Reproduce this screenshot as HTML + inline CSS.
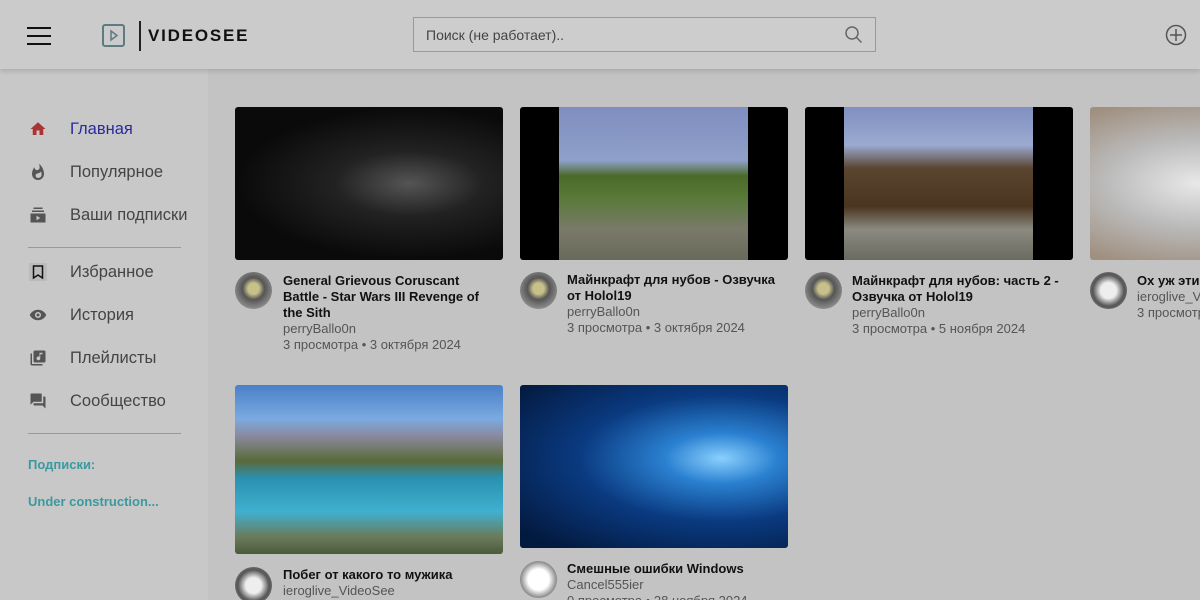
<!DOCTYPE html>
<html style="overflow:hidden"><head><meta charset="utf-8"><style>
*{margin:0;padding:0;box-sizing:border-box}
body{width:1200px;height:600px;overflow:hidden;background:#c3c3c3;font-family:"Liberation Sans",sans-serif;position:relative}
.hdr{position:absolute;left:0;top:0;width:1200px;height:69px;background:#cbcbcb;box-shadow:0 2px 5px rgba(0,0,0,.15);z-index:2}
.side{position:absolute;left:0;top:69px;width:208px;height:531px;background:#c8c8c8}
.burger{position:absolute;left:27px;top:27px;width:24px}
.burger i{display:block;height:2px;background:#111;margin-bottom:6px}
.logo{position:absolute;left:102px;top:24px;width:23px;height:23px;border:2px solid #5d7b80;border-radius:3px}
.bar{position:absolute;left:139px;top:21px;width:2px;height:30px;background:#222}
.brand{position:absolute;left:148px;top:26px;font-weight:bold;font-size:17px;letter-spacing:1.8px;color:#111}
.search{position:absolute;left:413px;top:17px;width:463px;height:35px;border:1px solid #999;background:#cdcdcd;font-size:14px;color:#444;padding:9px 12px}
.nav{position:absolute;left:70px;font-size:16.5px;color:#444}
.ico{position:absolute;left:29px;width:18px;height:18px}
.hr{position:absolute;left:28px;width:153px;height:1px;background:#999}
.sub{position:absolute;left:28px;font-size:13px;font-weight:bold;color:#3a9aa0}
.th{position:absolute;width:268px;border-radius:3px;overflow:hidden}
.av{position:absolute;width:37px;height:37px;border-radius:50%;background:radial-gradient(circle at 50% 45%,#c8c08a 0 20%,#555 40%,#888 70%,#aaa)}
.t{position:absolute;font-size:13px;font-weight:bold;color:#111;line-height:16px;width:210px}
.m{position:absolute;font-size:13px;color:#555;line-height:16px;white-space:nowrap}
</style></head><body>
<div class="hdr">
<div class="burger"><i></i><i></i><i></i></div>
<div class="logo"><svg width="19" height="19" viewBox="0 0 19 19" style="position:absolute;left:0;top:0"><path d="M7 5l6 4.5-6 4.5z" fill="none" stroke="#5d7b80" stroke-width="1.5"/></svg></div>
<div class="bar"></div><div class="brand">VIDEOSEE</div>
<div class="search">Поиск (не работает)..<svg width="18" height="18" style="position:absolute;right:12px;top:8px"><circle cx="7" cy="7" r="6" fill="none" stroke="#666" stroke-width="1.5"/><path d="M11.5 11.5l5 5" stroke="#666" stroke-width="1.5"/></svg></div>
<svg width="22" height="22" style="position:absolute;left:1165px;top:24px"><circle cx="11" cy="11" r="9.5" fill="none" stroke="#555" stroke-width="1.5"/><path d="M11 5v12M5 11h12" stroke="#555" stroke-width="1.5"/></svg>
</div>
<div class="side">
<svg class="ico" style="top:51px" viewBox="0 0 24 24"><path d="M10 20v-6h4v6h5v-8h3L12 3 2 12h3v8z" fill="#a33"/></svg>
<div class="nav" style="top:51px;color:#2a2aa0">Главная</div>
<svg class="ico" style="top:94px" viewBox="0 0 24 24"><path d="M13.5 1s.7 2.6.7 4.8c0 2-1.4 3.7-3.4 3.7S7.3 7.8 7.3 5.8L7.3 5.5C5.3 8 4 11.2 4 14.7a8 8 0 0016 0C20 9 17.3 4.4 13.5 1zM12 20c-1.8 0-3.2-1.4-3.2-3.1 0-1.6 1-2.7 2.8-3 1.7-.4 3.6-1.2 4.6-2.6.4 1.3.6 2.7.6 4.1 0 2.6-2.1 4.6-4.8 4.6z" fill="#555"/></svg>
<div class="nav" style="top:94px">Популярное</div>
<svg class="ico" style="top:137px" viewBox="0 0 24 24"><path d="M6 2h12v2H6zM4 6h16v2H4zM2 10h20v12H2zm8 3v6l5-3z" fill="#555"/></svg>
<div class="nav" style="top:137px">Ваши подписки</div>
<div class="hr" style="top:178px"></div>
<svg class="ico" style="top:194px" viewBox="0 0 24 24"><rect width="24" height="24" fill="#bbb"/><path d="M6 4h12v16l-6-4-6 4z" fill="none" stroke="#111" stroke-width="2"/></svg>
<div class="nav" style="top:194px">Избранное</div>
<svg class="ico" style="top:237px" viewBox="0 0 24 24"><path d="M12 5C7 5 3 8 1 12c2 4 6 7 11 7s9-3 11-7c-2-4-6-7-11-7zm0 11a4 4 0 110-8 4 4 0 010 8zm0-6a2 2 0 100 4 2 2 0 000-4z" fill="#555"/></svg>
<div class="nav" style="top:237px">История</div>
<svg class="ico" style="top:280px" viewBox="0 0 24 24"><path d="M4 6H2v14a2 2 0 002 2h14v-2H4zm16-4H8a2 2 0 00-2 2v12a2 2 0 002 2h12a2 2 0 002-2V4a2 2 0 00-2-2zm-2 5h-3v5.5a2.5 2.5 0 11-1-2V5h4z" fill="#555"/></svg>
<div class="nav" style="top:280px">Плейлисты</div>
<svg class="ico" style="top:323px" viewBox="0 0 24 24"><path d="M21 6h-2v9H6v2a1 1 0 001 1h11l4 4V7a1 1 0 00-1-1zm-4 6V3a1 1 0 00-1-1H3a1 1 0 00-1 1v14l4-4h10a1 1 0 001-1z" fill="#555"/></svg>
<div class="nav" style="top:323px">Сообщество</div>
<div class="hr" style="top:364px"></div>
<div class="sub" style="top:388px">Подписки:</div>
<div class="sub" style="top:425px">Under construction...</div>
</div>

<div class="th" style="left:235px;top:107px;height:153px;background:radial-gradient(ellipse at 65% 50%,#555 0,#222 30%,#0a0a0a 70%)"></div>
<div class="th" style="left:520px;top:107px;height:153px;background:linear-gradient(90deg,#000 0 39px,transparent 39px 228px,#000 228px),linear-gradient(180deg,#7f8ec0 0,#8fa0c8 35%,#4a6a2a 45%,#5a7a3a 60%,#7a7a6a 80%,#6a6a5a)"></div>
<div class="th" style="left:805px;top:107px;height:153px;background:linear-gradient(90deg,#000 0 39px,transparent 39px 228px,#000 228px),linear-gradient(180deg,#8090c0 0,#9aaad0 25%,#5a4530 40%,#4a3520 65%,#8a8a80 80%,#6a6a60)"></div>
<div class="th" style="left:1090px;top:107px;height:153px;background:radial-gradient(ellipse at 40% 50%,#e8e8e8 0,#bbb 40%,#a09080 80%)"></div>

<div class="av" style="left:235px;top:272px"></div>
<div class="t" style="left:283px;top:273px">General Grievous Coruscant Battle - Star Wars III Revenge of the Sith</div>
<div class="m" style="left:283px;top:321px">perryBallo0n</div>
<div class="m" style="left:283px;top:337px">3 просмотра • 3 октября 2024</div>

<div class="av" style="left:520px;top:272px"></div>
<div class="t" style="left:567px;top:272px;width:225px">Майнкрафт для нубов - Озвучка от Holol19</div>
<div class="m" style="left:567px;top:304px">perryBallo0n</div>
<div class="m" style="left:567px;top:320px">3 просмотра • 3 октября 2024</div>

<div class="av" style="left:805px;top:272px"></div>
<div class="t" style="left:852px;top:273px;width:225px">Майнкрафт для нубов: часть 2 - Озвучка от Holol19</div>
<div class="m" style="left:852px;top:305px">perryBallo0n</div>
<div class="m" style="left:852px;top:321px">3 просмотра • 5 ноября 2024</div>

<div class="av" style="left:1090px;top:272px;background:radial-gradient(circle,#eee 0 30%,#555 60%,#999)"></div>
<div class="t" style="left:1137px;top:273px;white-space:nowrap">Ох уж эти</div>
<div class="m" style="left:1137px;top:289px">ieroglive_VideoSee</div>
<div class="m" style="left:1137px;top:305px">3 просмотра</div>

<div class="th" style="left:235px;top:385px;height:169px;background:linear-gradient(180deg,#4a80c8 0,#7aaae0 20%,#8a8aa0 30%,#5a6a3a 45%,#2a90b0 55%,#40b0d0 75%,#6a7a5a 90%,#4a5a3a)"></div>
<div class="th" style="left:520px;top:385px;height:163px;background:radial-gradient(ellipse at 75% 45%,#8ad0ff 0,#2a80d0 20%,#0a3a80 50%,#031a40 90%)"></div>

<div class="av" style="left:235px;top:567px;background:radial-gradient(circle,#eee 0 30%,#555 60%,#999)"></div>
<div class="t" style="left:283px;top:567px;width:250px">Побег от какого то мужика</div>
<div class="m" style="left:283px;top:583px">ieroglive_VideoSee</div>
<div class="av" style="left:520px;top:561px;background:radial-gradient(circle,#fff 0 40%,#888 70%,#bbb)"></div>
<div class="t" style="left:567px;top:561px;width:250px">Смешные ошибки Windows</div>
<div class="m" style="left:567px;top:577px">Cancel555ier</div>
<div class="m" style="left:567px;top:593px">0 просмотра • 28 ноября 2024</div>
</body></html>
